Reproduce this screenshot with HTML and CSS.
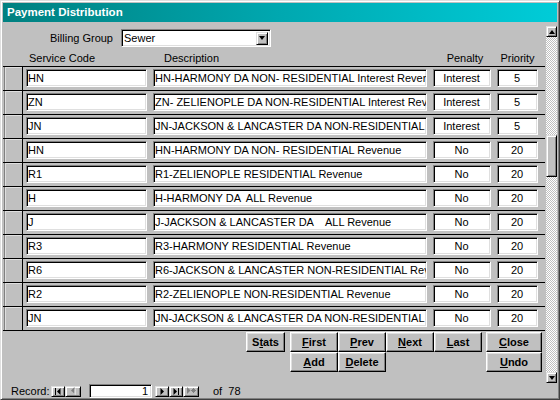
FILE: index.html
```html
<!DOCTYPE html>
<html>
<head>
<meta charset="utf-8">
<title>Payment Distribution</title>
<link rel="stylesheet" href="styles.css">
</head>
<body>
<div class="window">
  <div class="titlebar">Payment Distribution</div>
  <div class="main">
    <div class="form">
      <div class="filter">
        <span class="filter-label">Billing Group</span>
        <div class="combo"><span class="combo-text">Sewer</span><span class="combo-btn"><span class="tri-down"></span></span></div>
      </div>
      <div class="heads">
        <span class="h-sel"></span>
        <span class="h-code">Service Code</span>
        <span class="h-desc">Description</span>
        <span class="h-pen">Penalty</span>
        <span class="h-pri">Priority</span>
      </div>
      <div class="grid">
        <div class="row"><span class="sel"></span><span class="field code">HN</span><span class="field desc">HN-HARMONY DA NON- RESIDENTIAL Interest Revenue</span><span class="field pen">Interest</span><span class="field pri">5</span></div>
        <div class="row"><span class="sel"></span><span class="field code">ZN</span><span class="field desc">ZN- ZELIENOPLE DA NON-RESIDENTIAL Interest Revenue</span><span class="field pen">Interest</span><span class="field pri">5</span></div>
        <div class="row"><span class="sel"></span><span class="field code">JN</span><span class="field desc">JN-JACKSON &amp; LANCASTER DA NON-RESIDENTIAL Interest Revenue</span><span class="field pen">Interest</span><span class="field pri">5</span></div>
        <div class="row"><span class="sel"></span><span class="field code">HN</span><span class="field desc">HN-HARMONY DA NON- RESIDENTIAL Revenue</span><span class="field pen">No</span><span class="field pri">20</span></div>
        <div class="row"><span class="sel"></span><span class="field code">R1</span><span class="field desc">R1-ZELIENOPLE RESIDENTIAL Revenue</span><span class="field pen">No</span><span class="field pri">20</span></div>
        <div class="row"><span class="sel"></span><span class="field code">H</span><span class="field desc">H-HARMONY DA  ALL Revenue</span><span class="field pen">No</span><span class="field pri">20</span></div>
        <div class="row"><span class="sel"></span><span class="field code">J</span><span class="field desc">J-JACKSON &amp; LANCASTER DA    ALL Revenue</span><span class="field pen">No</span><span class="field pri">20</span></div>
        <div class="row"><span class="sel"></span><span class="field code">R3</span><span class="field desc">R3-HARMONY RESIDENTIAL Revenue</span><span class="field pen">No</span><span class="field pri">20</span></div>
        <div class="row"><span class="sel"></span><span class="field code">R6</span><span class="field desc">R6-JACKSON &amp; LANCASTER NON-RESIDENTIAL Revenue</span><span class="field pen">No</span><span class="field pri">20</span></div>
        <div class="row"><span class="sel"></span><span class="field code">R2</span><span class="field desc">R2-ZELIENOPLE NON-RESIDENTIAL Revenue</span><span class="field pen">No</span><span class="field pri">20</span></div>
        <div class="row"><span class="sel"></span><span class="field code">JN</span><span class="field desc">JN-JACKSON &amp; LANCASTER DA NON-RESIDENTIAL Flat Revenue</span><span class="field pen">No</span><span class="field pri">20</span></div>
      </div>
      <div class="buttons">
        <div class="btn-row r1">
          <span class="btn w-stats">S<u>t</u>ats</span>
          <span class="btn w-nav first"><u>F</u>irst</span>
          <span class="btn w-nav"><u>P</u>rev</span>
          <span class="btn w-nav"><u>N</u>ext</span>
          <span class="btn w-nav"><u>L</u>ast</span>
          <span class="btn w-close"><u>C</u>lose</span>
        </div>
        <div class="btn-row r2">
          <span class="btn w-nav"><u>A</u>dd</span>
          <span class="btn w-nav"><u>D</u>elete</span>
          <span class="btn w-close undo"><u>U</u>ndo</span>
        </div>
      </div>
    </div>
    <div class="vscroll">
      <div class="sbtn"><span class="tri-up"></span></div>
      <div class="track"><div class="thumb"></div></div>
      <div class="sbtn"><span class="tri-down"></span></div>
    </div>
  </div>
  <div class="recordbar">
    <span class="rec-label">Record:</span>
    <span class="nav"><svg width="8" height="7" viewBox="0 0 8 7"><rect x="1" y="0" width="1" height="7"/><polygon points="6.5,0 6.5,7 3,3.5"/></svg></span>
    <span class="nav nav-wide"><svg width="8" height="8" viewBox="0 0 8 8"><polygon points="6.5,1 6.5,8 3,4.5" fill="#fff"/><polygon points="5.5,0 5.5,7 2,3.5" fill="#808080"/></svg></span>
    <span class="rec-box">1</span>
    <span class="nav"><svg width="8" height="7" viewBox="0 0 8 7"><polygon points="2.5,0 2.5,7 6,3.5"/></svg></span>
    <span class="nav"><svg width="8" height="7" viewBox="0 0 8 7"><polygon points="1.5,0 1.5,7 5,3.5"/><rect x="6" y="0" width="1" height="7"/></svg></span>
    <span class="nav nav-wide"><svg width="11" height="8" viewBox="0 0 11 8"><g fill="#808080"><polygon points="1,0 1,7 4.5,3.5"/><rect x="7" y="1" width="1" height="5"/><rect x="5" y="3" width="5" height="1"/><rect x="6" y="2" width="1" height="1"/><rect x="8" y="2" width="1" height="1"/><rect x="6" y="4" width="1" height="1"/><rect x="8" y="4" width="1" height="1"/></g></svg></span>
    <span class="rec-of">of&nbsp; 78</span>
  </div>
</div>
</body>
</html>
```

FILE: styles.css
```css
* { box-sizing: border-box; }
html, body { margin: 0; padding: 0; }
body {
  width: 560px;
  height: 400px;
  overflow: hidden;
  background: #c0c0c0;
  font-family: "Liberation Sans", Arial, sans-serif;
  font-size: 11px;
  color: #000;
}

.window {
  width: 560px;
  height: 400px;
  display: flex;
  flex-direction: column;
  background: #c0c0c0;
  border: 1px solid;
  border-color: #dfdfdf #404040 #404040 #dfdfdf;
  box-shadow: inset 1px 1px 0 #fff, inset -1px -1px 0 #808080;
  padding: 2px 2px 1px 2px;
}

.titlebar {
  flex: none;
  height: 19px;
  background: linear-gradient(90deg, #008080 0%, #00a8b0 50%, #00ccd8 100%);
  color: #fff;
  font-weight: bold;
  font-size: 11.5px;
  line-height: 19px;
  padding-left: 4px;
  white-space: nowrap;
}

.main {
  flex: none;
  height: 362px;
  display: flex;
}

.form {
  flex: none;
  width: 542px;
  display: flex;
  flex-direction: column;
}

/* Billing group filter */
.filter {
  display: flex;
  align-items: center;
  height: 25px;
  padding-top: 7px;
}
.filter-label {
  width: 110px;
  margin-right: 8px;
  text-align: right;
  line-height: 13px;
}
.combo {
  width: 150px;
  height: 18px;
  display: flex;
  align-items: center;
  background: #fff;
  border: 1px solid;
  border-color: #808080 #fff #fff #808080;
  box-shadow: inset 1px 1px 0 #000, inset -1px -1px 0 #dfdfdf;
  padding: 0 2px 0 2px;
}
.combo-text {
  flex: 1;
  line-height: 16px;
}
.combo-btn {
  width: 12px;
  height: 13px;
  display: flex;
  align-items: center;
  justify-content: center;
  background: #c0c0c0;
  border: 1px solid;
  border-color: #dfdfdf #000 #000 #dfdfdf;
  box-shadow: inset 1px 1px 0 #fff, inset -1px -1px 0 #808080;
}

.tri-down, .tri-up {
  width: 0;
  height: 0;
  border-left: 3.5px solid transparent;
  border-right: 3.5px solid transparent;
}
.tri-down { border-top: 4px solid #000; }
.tri-up { border-bottom: 4px solid #000; }

/* column headers */
.heads {
  display: flex;
  height: 19px;
  padding-top: 5px;
  line-height: 13px;
  white-space: nowrap;
}
.h-sel { flex: none; width: 20px; }
.h-code { flex: none; margin-left: 3px; width: 121px; padding-left: 3px; }
.h-desc { flex: none; margin-left: 6px; width: 274px; padding-left: 11px; }
.h-pen { flex: none; margin-left: 6px; width: 58px; padding-left: 6px; text-align: center; }
.h-pri { flex: none; margin-left: 6px; width: 41px; text-align: center; }

/* rows */
.grid {
  border-bottom: 1px solid #000;
}
.row {
  display: flex;
  align-items: flex-start;
  height: 24px;
  border-top: 1px solid #000;
}
.sel {
  flex: none;
  width: 19px;
  height: 23px;
  margin-left: 1px;
  border-left: 1px solid #808080;
  border-right: 1px solid #000;
  box-shadow: inset 1px 1px 0 #dfdfdf;
}
.field {
  flex: none;
  display: block;
  height: 18px;
  margin-top: 2px;
  background: #fff;
  border: 1px solid;
  border-color: #808080 #fff #fff #808080;
  box-shadow: inset 1px 1px 0 #000, inset -1px -1px 0 #dfdfdf;
  padding: 0 2px 0 1px;
  line-height: 16px;
  white-space: pre;
  overflow: hidden;
}
.code { margin-left: 3px; width: 121px; }
.desc { margin-left: 6px; width: 274px; }
.pen { margin-left: 6px; width: 58px; text-align: center; }
.pri { margin-left: 6px; width: 41px; text-align: center; }

/* command buttons */
.buttons {
  padding-top: 1px;
}
.btn-row {
  display: flex;
  height: 20px;
}
.r1 { padding-left: 243px; }
.r2 { padding-left: 287px; }
.btn {
  flex: none;
  display: block;
  height: 20px;
  background: #c0c0c0;
  border: 1px solid;
  border-color: #fff #000 #000 #fff;
  box-shadow: inset -1px -1px 0 #808080, inset 1px 1px 0 #dfdfdf;
  font-weight: bold;
  text-align: center;
  line-height: 18px;
  white-space: nowrap;
}
.btn u { text-decoration-thickness: 1px; text-underline-offset: 1px; }
.w-stats { width: 39px; }
.w-nav { width: 48px; }
.w-close { width: 56px; margin-left: 4px; }
.first { margin-left: 5px; }
.undo { margin-left: 100px; }

/* vertical scrollbar */
.vscroll {
  flex: none;
  width: 12px;
  padding-left: 1px;
  padding-top: 4px;
  display: flex;
  flex-direction: column;
}
.sbtn {
  flex: none;
  width: 11px;
  height: 11px;
  display: flex;
  align-items: center;
  justify-content: center;
  background: #c0c0c0;
  border: 1px solid;
  border-color: #dfdfdf #000 #000 #dfdfdf;
  box-shadow: inset 1px 1px 0 #fff, inset -1px -1px 0 #808080;
}
.track {
  flex: none;
  width: 11px;
  height: 335px;
  background: repeating-conic-gradient(#c0c0c0 0 25%, #fff 0 50%) 0 0 / 2px 2px;
}
.thumb {
  width: 11px;
  height: 42px;
  margin-top: 98px;
  background: #c0c0c0;
  border: 1px solid;
  border-color: #dfdfdf #000 #000 #dfdfdf;
  box-shadow: inset 1px 1px 0 #fff, inset -1px -1px 0 #808080;
}

/* record navigation bar */
.recordbar {
  flex: none;
  height: 14px;
  display: flex;
  align-items: center;
  padding-left: 8px;
  white-space: nowrap;
}
.rec-label {
  width: 40px;
  line-height: 13px;
}
.nav {
  flex: none;
  width: 14px;
  height: 11px;
  display: flex;
  align-items: center;
  justify-content: center;
  background: #c0c0c0;
  border: 1px solid;
  border-color: #dfdfdf #000 #000 #dfdfdf;
  box-shadow: inset 1px 1px 0 #fff, inset -1px -1px 0 #808080;
}
.nav svg { display: block; fill: #000; }
.nav-wide { width: 16px; }
.rec-box {
  flex: none;
  width: 63px;
  height: 14px;
  margin: 0 3px 0 8px;
  background: #fff;
  border: 1px solid;
  border-color: #808080 #fff #fff #808080;
  box-shadow: inset 1px 1px 0 #000, inset -1px -1px 0 #dfdfdf;
  padding-right: 3px;
  text-align: right;
  line-height: 12px;
}
.rec-of {
  margin-left: 14px;
  line-height: 13px;
}
```
